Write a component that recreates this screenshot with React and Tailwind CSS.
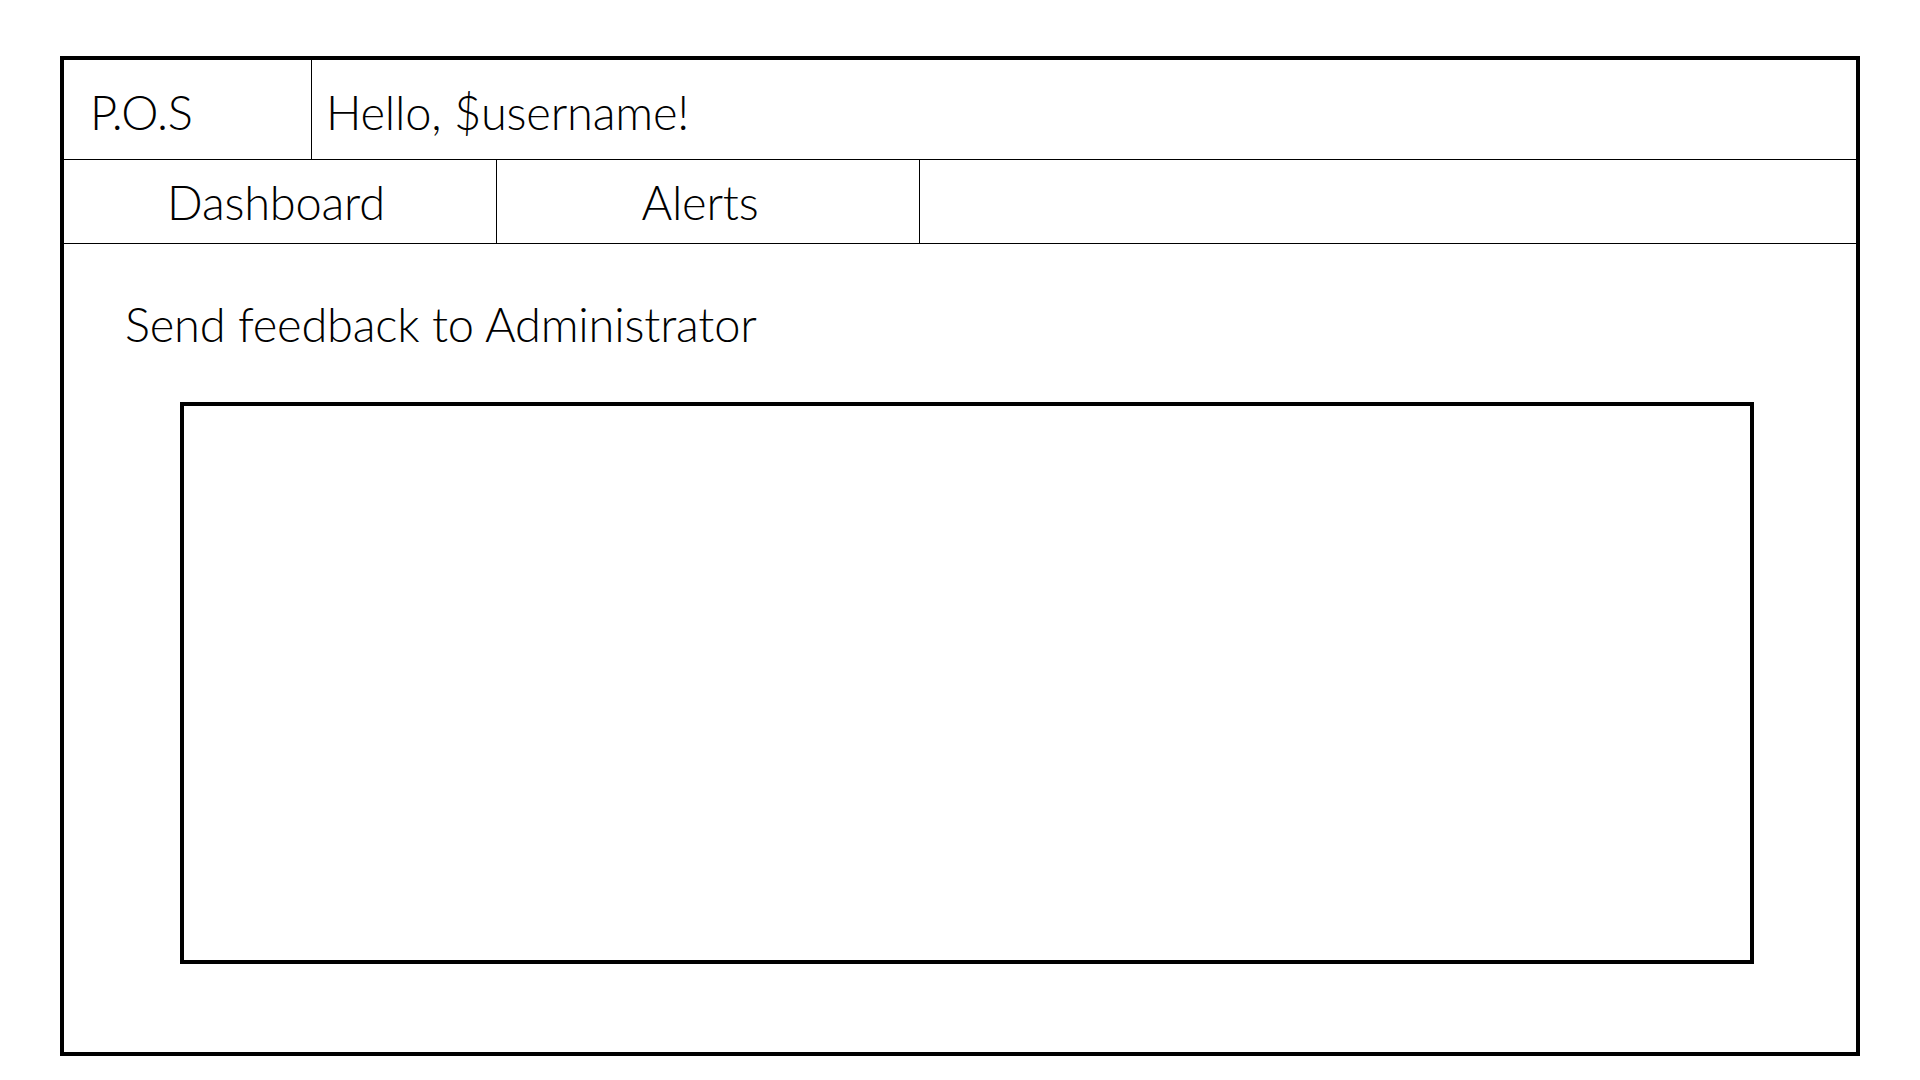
export default function App() {
  return (
    <div
      className="min-h-screen bg-white pt-[56px] pl-[60px] text-black font-light text-[47px] leading-[48px] tracking-[-0.2px]"
      style={{ fontFamily: "Lato, 'Open Sans', sans-serif" }}
    >
      <div className="w-[1800px] h-[1000px] border-4 border-black flex flex-col">
        {/* top bar */}
        <div className="flex h-[100px] border-b border-black">
          <div className="w-[248px] border-r border-black flex items-center pl-[26px] pt-1">
            P.O.S
          </div>
          <div className="flex-1 flex items-center pl-[14px] pt-1">Hello, $username!</div>
        </div>

        {/* tabs */}
        <div className="flex h-[84px] border-b border-black">
          <div className="w-[433px] border-r border-black flex items-center justify-center pr-2">
            Dashboard
          </div>
          <div className="w-[423px] border-r border-black flex items-center justify-center pr-4">
            Alerts
          </div>
        </div>

        {/* feedback */}
        <div className="pt-[56px] pl-[61px]">Send feedback to Administrator</div>
        <div className="mt-[54px] ml-[116px] w-[1574px] h-[562px] border-4 border-black" />
      </div>
    </div>
  );
}
